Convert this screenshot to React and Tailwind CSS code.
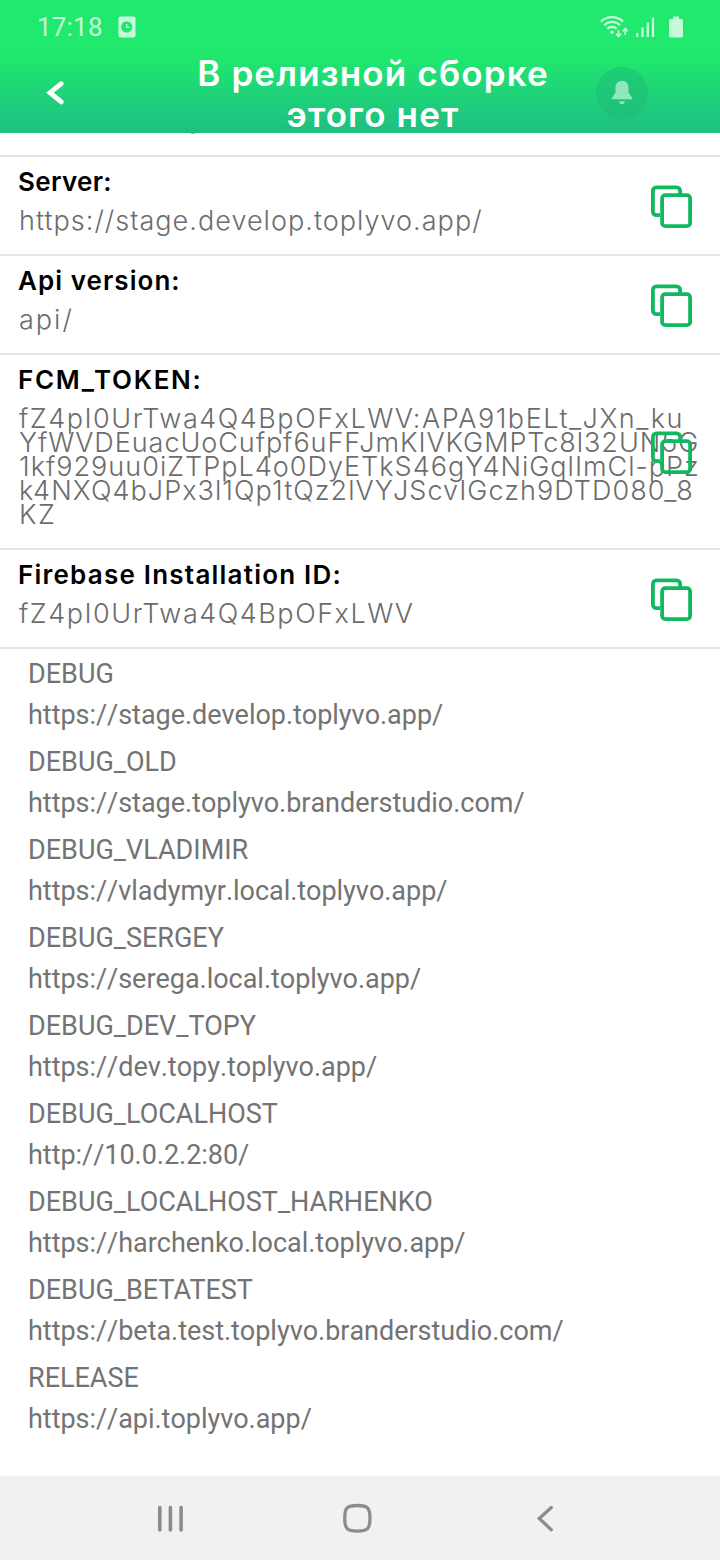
import React from "react";

const copyRows = [
  { label: "Server:", labelClass: "tracking-[0.3px]", lines: [["https://stage.develop.toplyvo.app/", "tracking-[1.03px]"]] },
  { label: "Api version:", labelClass: "tracking-[1.05px]", lines: [["api/", "tracking-[2px]"]] },
  {
    label: "FCM_TOKEN:",
    labelClass: "tracking-[1.65px]",
    lines: [
      ["fZ4pI0UrTwa4Q4BpOFxLWV:APA91bELt_JXn_ku", "tracking-[1.53px]"],
      ["YfWVDEuacUoCufpf6uFFJmKIVKGMPTc8l32UN5G", "tracking-[0.95px]"],
      ["1kf929uu0iZTPpL4o0DyETkS46gY4NiGqlImCl-pPz", "tracking-[1.02px]"],
      ["k4NXQ4bJPx3l1Qp1tQz2lVYJScvIGczh9DTD080_8", "tracking-[1.06px]"],
      ["KZ", "tracking-[1.5px]"],
    ],
  },
  { label: "Firebase Installation ID:", labelClass: "tracking-[1.22px]", lines: [["fZ4pI0UrTwa4Q4BpOFxLWV", "tracking-[1.53px]"]] },
];

const servers = [
  ["DEBUG", "https://stage.develop.toplyvo.app/"],
  ["DEBUG_OLD", "https://stage.toplyvo.branderstudio.com/"],
  ["DEBUG_VLADIMIR", "https://vladymyr.local.toplyvo.app/"],
  ["DEBUG_SERGEY", "https://serega.local.toplyvo.app/"],
  ["DEBUG_DEV_TOPY", "https://dev.topy.toplyvo.app/"],
  ["DEBUG_LOCALHOST", "http://10.0.2.2:80/"],
  ["DEBUG_LOCALHOST_HARHENKO", "https://harchenko.local.toplyvo.app/"],
  ["DEBUG_BETATEST", "https://beta.test.toplyvo.branderstudio.com/"],
  ["RELEASE", "https://api.toplyvo.app/"],
];

function CopyIcon() {
  return (
    <svg className="h-11 w-[42px]" viewBox="0 0 42 44" fill="none" stroke="#0fb95f" strokeWidth="3.8">
      <path d="M10 30.2H6.4a3.5 3.5 0 0 1-3.5-3.5V5.9a3.5 3.5 0 0 1 3.5-3.5h20.2a3.5 3.5 0 0 1 3.5 3.5V9" />
      <rect x="12.1" y="10.2" width="28" height="31" rx="3.2" />
    </svg>
  );
}

function StatusBar() {
  return (
    <div className="flex h-[53px] items-center pl-[37px] pr-9 text-white/75">
      <span className="w-[65px] font-['Roboto',sans-serif] text-[26px] leading-none tracking-[0.2px]">17:18</span>
      <svg className="ml-4 h-[22px] w-[18px]" viewBox="0 0 18 22">
        <rect x="0.5" y="0.5" width="17" height="21" rx="2" fill="currentColor" />
        <circle cx="8.7" cy="11" r="5.7" fill="#20e86e" />
        <path d="M8.7 8v3.4h3" fill="none" stroke="#c8fadb" strokeWidth="1.4" />
      </svg>
      <svg className="ml-auto h-[22px] w-[84px]" viewBox="0 0 84 22" fill="none" stroke="currentColor">
        <path d="M1 5.6a15.6 15.6 0 0 1 22 0M4.2 9.3a11 11 0 0 1 15.8 0M7.3 12.8a6.5 6.5 0 0 1 9.4 0" strokeWidth="2.2" />
        <circle cx="12" cy="16.2" r="1.7" fill="currentColor" stroke="none" />
        <path d="M18.5 14v6.2M15.9 17.7l2.6 2.8 2.6-2.8M25.2 19v-6.2M22.600 15.300l2.600-2.800 2.600 2.800" strokeWidth="1.6" />
        <path d="M37.200 17v4M42.500 11.500V21M47.800 6.500V21M53 1.500V21" strokeWidth="2.300" />
        <path d="M73 .5h6v2.600h2.600a1.400 1.400 0 0 1 1.400 1.400v15.600a1.400 1.400 0 0 1-1.400 1.400H70.400a1.400 1.400 0 0 1-1.400-1.400V4.500a1.400 1.400 0 0 1 1.400-1.400H73z" fill="currentColor" stroke="none" />
      </svg>
    </div>
  );
}

function Header() {
  return (
    <header className="z-10 h-[133px] shrink-0 bg-linear-to-b from-[#20e96d] from-40% to-[#1ebf80]">
      <StatusBar />
      <div className="flex h-20 items-center">
        <button className="flex w-[150px] shrink-0 pl-[46px]" aria-label="Назад">
          <svg className="h-[26px] w-5" viewBox="0 0 20 26" fill="none" stroke="white" strokeWidth="4.8" strokeLinecap="round" strokeLinejoin="miter">
            <path d="M15.300 3.700L4 12.700l11.300 9.200" />
          </svg>
        </button>
        <h1 className="w-[446px] pt-0.5 text-center font-['Inter',sans-serif] text-[35px] leading-[41px] font-semibold tracking-[1.15px] whitespace-nowrap text-white">
          В релизной сборке
          <br />
          этого нет
        </h1>
        <div className="flex size-[52px] shrink-0 items-center justify-center rounded-full bg-[#1eb977]/50">
          <svg className="h-[26px] w-[22px]" viewBox="0 0 22 26" fill="#92e6bc">
            <path d="M11 .8c-3.900 0-6.500 2.800-6.500 6.600v5.200L.8 17.900v1.300h20.400v-1.300l-3.700-5.300V7.400C17.500 3.600 14.900.8 11 .8zM8.300 21.300h5.400c0 1.800-1.200 3-2.700 3s-2.700-1.200-2.700-3z" />
          </svg>
        </div>
      </div>
    </header>
  );
}

function CopyRow({ label, labelClass, lines }) {
  return (
    <div className="flex items-center border-b-2 border-[#e4e4e4] pb-[21px] pl-[18px]">
      <div className="w-[632px] shrink-0 font-['Inter',sans-serif] whitespace-nowrap">
        <div className={`pt-2 pb-[11px] text-[26px] leading-[33px] font-semibold text-black ${labelClass}`}>{label}</div>
        {lines.map(([text, tracking]) => (
          <div key={text} className={`h-6 pl-px text-[27px] leading-6 font-light text-[#6c6c6c] ${tracking}`}>
            {text}
          </div>
        ))}
      </div>
      <button className="relative mt-[23px] shrink-0" aria-label="Копировать">
        <CopyIcon />
      </button>
    </div>
  );
}

function NavBar() {
  return (
    <nav className="flex h-[84px] shrink-0 items-center bg-[#f1f1f1] pl-[157px] text-[#8c8c8c]">
      <svg className="h-[30px] w-[27px]" viewBox="0 0 27 30" fill="none" stroke="currentColor" strokeWidth="3.6" strokeLinecap="round">
        <path d="M2.8 4.500v22.500M13.400 4.500v22.500M24.100 4.500v22.500" />
      </svg>
      <svg className="ml-[158px] h-[30px] w-[30px]" viewBox="0 0 30 30" fill="none" stroke="currentColor" strokeWidth="3.3">
        <path d="M15.300 2.500C25.700 2.500 28 4.800 28 15.300S25.700 28.100 15.300 28.100 2.700 25.800 2.700 15.300 4.900 2.500 15.300 2.500z" />
      </svg>
      <svg className="ml-[164px] h-[30px] w-[18px]" viewBox="0 0 18 30" fill="none" stroke="currentColor" strokeWidth="3.3" strokeLinecap="round">
        <path d="M15.300 4.500L3.300 15.500l12 11.200" />
      </svg>
    </nav>
  );
}

export default function App() {
  return (
    <div className="flex h-[1560px] w-[720px] flex-col overflow-hidden bg-white">
      <Header />
      <main className="flex-1">
        <div className="-mt-[24px] h-12 border-b-2 border-[#e4e4e4] pl-[185px] font-['Inter',sans-serif] text-[26px] leading-5 font-light text-[#5f5f5f]">
          g
        </div>
        {copyRows.map((row) => (
          <CopyRow key={row.label} {...row} />
        ))}
        <dl className="pt-[5px] pl-7 font-['Roboto',sans-serif] text-[27px] text-[#737373]">
          {servers.map(([name, url]) => (
            <div key={name} className="h-[88px]">
              <dt className="h-[41px] leading-10">{name}</dt>
              <dd className="leading-10 tracking-[-0.03px] [font-kerning:none]">{url}</dd>
            </div>
          ))}
        </dl>
      </main>
      <NavBar />
    </div>
  );
}
